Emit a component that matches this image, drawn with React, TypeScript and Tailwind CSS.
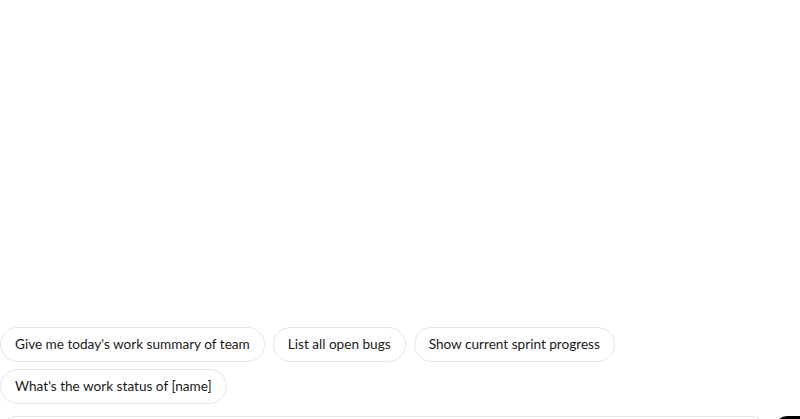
export default function App() {
  const prompts = [
    "Give me today's work summary of team",
    "List all open bugs",
    "Show current sprint progress",
    "What's the work status of [name]",
  ];

  return (
    <div
      className="h-[419px] w-[800px] overflow-hidden bg-white flex flex-col"
      style={{ fontFamily: "Lato, 'Open Sans', sans-serif" }}
    >
      <div className="flex-1" />

      {/* Suggested prompts */}
      <div className="flex flex-wrap gap-x-2 gap-y-[7px]">
        {prompts.map((p) => (
          <button
            key={p}
            className="h-[35px] px-[14px] rounded-full border border-[#e6e6e6] bg-white text-[13.6px] text-[#1a1a1a] whitespace-nowrap"
          >
            {p}
          </button>
        ))}
      </div>

      {/* Input row, mostly below the fold */}
      <div className="mt-3 mb-[-45px] flex gap-2 w-[840px] shrink-0">
        <div className="h-12 w-[767px] shrink-0 rounded-2xl border border-[#e6e6e6]" />
        <button className="h-12 w-10 rounded-xl bg-black" />
      </div>
    </div>
  );
}
